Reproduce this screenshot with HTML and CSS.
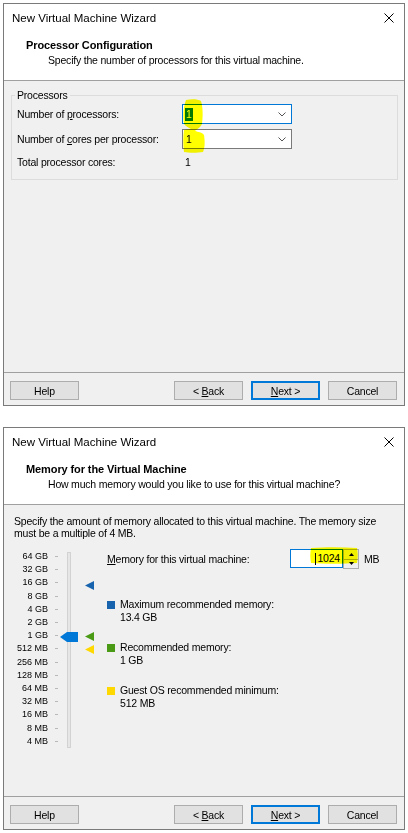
FILE: index.html
```html
<!DOCTYPE html>
<html lang="en">
<head>
<meta charset="utf-8">
<title>New Virtual Machine Wizard</title>
<link rel="stylesheet" href="styles.css">
</head>
<body>
<div class="page">

  <section class="dialog">
    <div class="titlebar">
      <span class="title">New Virtual Machine Wizard</span>
      <svg class="close" viewBox="0 0 10 10" width="10" height="10"><path d="M0.5 0.5 L9.5 9.5 M9.5 0.5 L0.5 9.5" stroke="#000" stroke-width="1" fill="none"/></svg>
    </div>
    <div class="header">
      <div class="heading">Processor Configuration</div>
      <div class="subtitle">Specify the number of processors for this virtual machine.</div>
    </div>
    <div class="body body-proc">
      <fieldset class="group">
        <legend>Processors</legend>
        <div class="form-grid">
          <span class="flabel">Number of <u>p</u>rocessors:</span>
          <div class="combo focused"><span class="sel">1</span><svg class="chev" viewBox="0 0 8 5" width="8" height="5"><path d="M0.5 0.5 L4 4 L7.5 0.5" stroke="#555" fill="none"/></svg></div>
          <span class="flabel">Number of <u>c</u>ores per processor:</span>
          <div class="combo"><span class="val">1</span><svg class="chev" viewBox="0 0 8 5" width="8" height="5"><path d="M0.5 0.5 L4 4 L7.5 0.5" stroke="#555" fill="none"/></svg></div>
          <span class="flabel total">Total processor cores:</span>
          <span class="total-value">1</span>
        </div>
      </fieldset>
      <svg class="marker marker-proc" viewBox="0 0 22 54" width="22" height="54"><path d="M3 1 C8 0 15 0 18 2 C20 8 20 18 19 25 C17 29 14 30 12 32 C15 33 19 33 21 36 C22 42 22 49 20 53 C14 54 6 54 1 53 C0 46 0 38 1 31 C4 30 6 30 8 30 C5 28 2 27 1 25 C0 18 0 9 3 1 Z" fill="#ffff00"/></svg>
    </div>
    <div class="footer">
      <button class="btn help">Help</button>
      <button class="btn">&lt; <u>B</u>ack</button>
      <button class="btn default"><u>N</u>ext &gt;</button>
      <button class="btn">Cancel</button>
    </div>
  </section>

  <section class="dialog">
    <div class="titlebar">
      <span class="title">New Virtual Machine Wizard</span>
      <svg class="close" viewBox="0 0 10 10" width="10" height="10"><path d="M0.5 0.5 L9.5 9.5 M9.5 0.5 L0.5 9.5" stroke="#000" stroke-width="1" fill="none"/></svg>
    </div>
    <div class="header">
      <div class="heading">Memory for the Virtual Machine</div>
      <div class="subtitle">How much memory would you like to use for this virtual machine?</div>
    </div>
    <div class="body body-mem">
      <p class="desc">Specify the amount of memory allocated to this virtual machine. The memory size<br>must be a multiple of 4 MB.</p>
      <div class="mem-area">
        <div class="scale">
          <div class="scale-labels">
            <div class="srow"><span>64 GB</span><i></i></div>
            <div class="srow"><span>32 GB</span><i></i></div>
            <div class="srow"><span>16 GB</span><i></i></div>
            <div class="srow"><span>8 GB</span><i></i></div>
            <div class="srow"><span>4 GB</span><i></i></div>
            <div class="srow"><span>2 GB</span><i></i></div>
            <div class="srow"><span>1 GB</span><i></i></div>
            <div class="srow"><span>512 MB</span><i></i></div>
            <div class="srow"><span>256 MB</span><i></i></div>
            <div class="srow"><span>128 MB</span><i></i></div>
            <div class="srow"><span>64 MB</span><i></i></div>
            <div class="srow"><span>32 MB</span><i></i></div>
            <div class="srow"><span>16 MB</span><i></i></div>
            <div class="srow"><span>8 MB</span><i></i></div>
            <div class="srow"><span>4 MB</span><i></i></div>
          </div>
          <div class="track"></div>
          <svg class="thumb" viewBox="0 0 18 10" width="18" height="10"><path d="M0 5 L7 0 H18 V10 H7 Z" fill="#0078d7"/></svg>
          <svg class="tri tri-max" viewBox="0 0 9 9" width="9" height="9"><path d="M0 4.5 L9 0 V9 Z" fill="#1763ad"/></svg>
          <svg class="tri tri-rec" viewBox="0 0 9 9" width="9" height="9"><path d="M0 4.5 L9 0 V9 Z" fill="#4b9a15"/></svg>
          <svg class="tri tri-min" viewBox="0 0 9 9" width="9" height="9"><path d="M0 4.5 L9 0 V9 Z" fill="#ffd800"/></svg>
        </div>
        <div class="mem-right">
          <div class="mem-row">
            <span class="mem-label"><u>M</u>emory for this virtual machine:</span>
            <div class="spin-input">
              <div class="num"><span class="caret"></span>1024</div>
              <div class="spinner">
                <div class="sp-half"><svg viewBox="0 0 5 3" width="5" height="3"><path d="M0 3 L2.5 0 L5 3 Z" fill="#000"/></svg></div>
                <div class="sp-half"><svg viewBox="0 0 5 3" width="5" height="3"><path d="M0 0 L2.5 3 L5 0 Z" fill="#000"/></svg></div>
              </div>
              <svg class="marker marker-mem" viewBox="0 0 48 17" width="48" height="17"><path d="M1 1 C15 0 32 0 47 1 C48 6 48 11 47 16 C32 17 15 17 1 16 C0 11 0 6 1 1 Z" fill="#ffff00"/></svg>
            </div>
            <span class="unit">MB</span>
          </div>
          <div class="legend">
            <div class="litem"><span class="sq sq-max"></span><div>Maximum recommended memory:<br>13.4 GB</div></div>
            <div class="litem"><span class="sq sq-rec"></span><div>Recommended memory:<br>1 GB</div></div>
            <div class="litem"><span class="sq sq-min"></span><div>Guest OS recommended minimum:<br>512 MB</div></div>
          </div>
        </div>
      </div>
    </div>
    <div class="footer">
      <button class="btn help">Help</button>
      <button class="btn">&lt; <u>B</u>ack</button>
      <button class="btn default"><u>N</u>ext &gt;</button>
      <button class="btn">Cancel</button>
    </div>
  </section>

</div>
</body>
</html>
```

FILE: styles.css
```css
* { box-sizing: border-box; }

html, body {
  margin: 0;
  padding: 0;
  background: #ffffff;
}

body {
  font-family: "Liberation Sans", Arial, sans-serif;
  font-size: 10.5px;
  letter-spacing: -0.2px;
  line-height: 13px;
  color: #000;
}

.page {
  padding: 3px 0 0 3px;
  display: flex;
  flex-direction: column;
  gap: 21px;
}

.dialog {
  width: 402px;
  height: 403px;
  border: 1px solid #7a7a7a;
  background: #f0f0f0;
  display: flex;
  flex-direction: column;
}

.titlebar {
  height: 28px;
  flex: none;
  background: #fff;
  display: flex;
  align-items: center;
  justify-content: space-between;
  padding: 0 10px 0 8px;
}

.title {
  font-size: 11.5px;
  letter-spacing: 0;
}

.close { display: block; }

.header {
  height: 49px;
  flex: none;
  background: #fff;
  border-bottom: 1px solid #a0a0a0;
  padding: 6px 0 0 22px;
}

.heading {
  font-weight: bold;
  font-size: 11px;
  letter-spacing: -0.1px;
  line-height: 14px;
}

.subtitle {
  margin: 1px 0 0 22px;
  line-height: 14px;
}

.body {
  flex: 1;
  position: relative;
}

/* ---------- Processor page ---------- */
.body-proc {
  padding: 8px 6px 0 7px;
}

.group {
  margin: 0;
  border: 1px solid #dcdcdc;
  padding: 2px 5px 9px 3px;
}

.group legend {
  padding: 0 2px;
  line-height: 13px;
}

.form-grid {
  margin-left: 2px;
  display: grid;
  grid-template-columns: 165px 110px;
  grid-template-rows: 20px 20px 16px;
  row-gap: 5px;
  align-items: center;
}

.combo {
  height: 20px;
  border: 1px solid #7a7a7a;
  background: #fff;
  display: flex;
  align-items: center;
  justify-content: space-between;
  padding: 0 5px 0 2px;
}

.combo.focused { border-color: #0078d7; }

.combo .sel {
  background: #0078d7;
  color: #fff;
  padding: 0 1px;
}

.combo .val { padding: 0 1px; }

.chev { display: block; }

.total-value { padding-left: 3px; }

.marker {
  position: absolute;
  mix-blend-mode: multiply;
  pointer-events: none;
}

.marker-proc {
  left: 179px;
  top: 18px;
}

/* ---------- Footer ---------- */
.footer {
  height: 33px;
  flex: none;
  border-top: 1px solid #a0a0a0;
  padding: 8px 7px 0 6px;
  display: flex;
  gap: 8px;
  align-items: flex-start;
}

.btn {
  width: 69px;
  height: 19px;
  background: #e1e1e1;
  border: 1px solid #adadad;
  font-family: "Liberation Sans", Arial, sans-serif;
  font-size: 10.5px;
  letter-spacing: -0.2px;
  color: #000;
  padding: 0;
  margin: 0;
}

.btn.help { margin-right: auto; }

.btn.default { border: 2px solid #0078d7; }

/* ---------- Memory page ---------- */
.body-mem {
  padding: 10px 10px 0 10px;
}

.desc {
  margin: 0;
  line-height: 12px;
  white-space: nowrap;
}

.mem-area {
  margin: 11px 0 0 -10px;
  display: flex;
}

.scale {
  position: relative;
  width: 103px;
  flex: none;
  display: flex;
}

.scale-labels {
  display: grid;
  grid-auto-rows: 13.2px;
}

.srow {
  display: flex;
  align-items: center;
  font-size: 9px;
  letter-spacing: 0;
  line-height: 13px;
}

.srow span {
  width: 44px;
  text-align: right;
  white-space: nowrap;
}

.srow i {
  width: 3px;
  height: 1px;
  background: #b9b9b9;
  margin-left: 7px;
}

.track {
  width: 4px;
  margin: 2px 0 0 9px;
  background: #e6e6e6;
  border: 1px solid #d2d2d2;
}

.thumb {
  position: absolute;
  left: 56px;
  top: 82px;
}

.tri {
  position: absolute;
  left: 81px;
}

.tri-max { top: 31px; }
.tri-rec { top: 82px; }
.tri-min { top: 95px; }

.mem-right {
  flex: 1;
  margin-top: -1px;
}

.mem-row {
  display: flex;
  align-items: center;
  height: 20px;
}

.mem-label { width: 183px; }

.spin-input {
  position: relative;
  display: flex;
  height: 20px;
}

.num {
  width: 53px;
  height: 19px;
  border: 1px solid #0078d7;
  background: #fff;
  display: flex;
  align-items: center;
  justify-content: flex-end;
  padding-right: 2px;
}

.caret {
  width: 1px;
  height: 12px;
  background: #000;
  margin-right: 1px;
}

.spinner {
  width: 16px;
  height: 20px;
  border: 1px solid #adadad;
  background: #f0f0f0;
  display: flex;
  flex-direction: column;
}

.sp-half {
  flex: 1;
  display: flex;
  align-items: center;
  justify-content: center;
}

.sp-half + .sp-half { border-top: 1px solid #adadad; }

.sp-half svg { display: block; }

.marker-mem {
  left: 20px;
  top: -2px;
}

.unit { margin-left: 5px; }

.legend {
  margin-top: 29px;
  display: flex;
  flex-direction: column;
  gap: 17px;
}

.litem {
  display: flex;
  align-items: flex-start;
}

.sq {
  width: 8px;
  height: 8px;
  margin: 3px 5px 0 0;
  flex: none;
}

.sq-max { background: #1763ad; }
.sq-rec { background: #4b9a15; }
.sq-min { background: #ffd800; }
```
